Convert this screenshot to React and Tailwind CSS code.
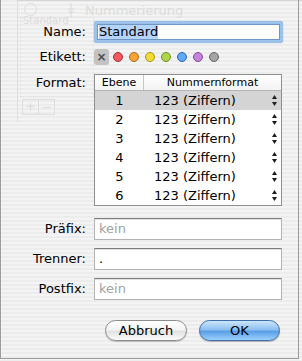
const LABELS = [
  { bg: 'bg-[#f25a5e]', ring: 'border-[#a83235]' },
  { bg: 'bg-[#f6a43a]', ring: 'border-[#b06a12]' },
  { bg: 'bg-[#f1dc3a]', ring: 'border-[#a89510]' },
  { bg: 'bg-[#b0d54a]', ring: 'border-[#6f8f1c]' },
  { bg: 'bg-[#62a9f6]', ring: 'border-[#2a68b0]' },
  { bg: 'bg-[#c483da]', ring: 'border-[#864a9c]' },
  { bg: 'bg-[#a5a5a5]', ring: 'border-[#666666]' },
]

const ROWS = [1, 2, 3, 4, 5, 6]

function Stepper() {
  return (
    <svg width="5" height="11" viewBox="0 0 5 11" className="shrink-0">
      <polygon points="2.5,0 5,4 0,4" fill="#1e1e1e" />
      <polygon points="0,7 5,7 2.5,11" fill="#1e1e1e" />
    </svg>
  )
}

function Field({ value, placeholder }) {
  return (
    <div className="w-[188px] h-[22px] bg-white border border-[#b3b3b3] border-t-[#7d7d7d] shadow-[inset_0_1px_0_#e2e2e2] flex items-center pl-[4px]">
      {value ? (
        <span className="text-black">{value}</span>
      ) : (
        <span className="text-[#a2a2a2]">{placeholder}</span>
      )}
    </div>
  )
}

function Row({ label, children, className = '' }) {
  return (
    <div className={`flex items-center ${className}`}>
      <div className="w-[85px] text-right leading-[12px]">{label}</div>
      <div className="ml-2">{children}</div>
    </div>
  )
}

// faded window behind the sheet
function Ghost() {
  return (
    <div className="absolute inset-0 pointer-events-none">
      <div className="absolute left-[17px] top-0 w-px h-[122px] bg-[#dedede]" />
      <div className="absolute left-[17px] top-0 right-0 h-px bg-[#d6d6d6]" />
      <div className="absolute left-[24px] top-[3px] w-[13px] h-[13px] rounded-full border border-[#dcdcdc]" />
      <svg width="8" height="14" viewBox="0 0 8 14" className="absolute left-[67px] top-[3px]">
        <line x1="4" y1="0" x2="4" y2="14" stroke="#dadada" />
        <line x1="1" y1="6" x2="7" y2="6" stroke="#dadada" />
        <line x1="1" y1="9" x2="7" y2="9" stroke="#dadada" />
      </svg>
      <div className="absolute left-[85px] top-[3px] text-[13px] leading-[15px] text-[#dcdcdc]">Nummerierung</div>
      <div className="absolute left-[20px] top-[17px] w-[74px] h-[80px] border border-dotted border-[#e0e0e0]" />
      <div className="absolute left-[23px] top-[17px] text-[10px] leading-[7px] text-[#dcdcdc]">Standard</div>
      <div className="absolute left-[22px] top-[99px] w-[33px] h-[16px] border border-[#dedede] flex text-[#dadada] text-[12px] leading-[14px]">
        <div className="flex-1 text-center border-r border-[#dedede]">+</div>
        <div className="flex-1 text-center">−</div>
      </div>
    </div>
  )
}

export default function App() {
  return (
    <div className="relative w-[302px] h-[361px] overflow-hidden bg-[repeating-linear-gradient(180deg,#ececec_0px,#ececec_2px,#f4f4f4_2px,#f4f4f4_4px)] font-['DejaVu_Sans',sans-serif] text-[13px] text-black">
      <Ghost />
      <div className="relative w-[299px] h-[359px] border-l border-b border-r border-[#9c9c9c] flex flex-col">
        <Row label="Name:" className="mt-[21px]">
          <div className="w-[189px] h-[22px] p-[3px] rounded-[3px] bg-[#9cc2e9] shadow-[0_0_1px_#6c9bd0]">
            <div className="h-full bg-white border border-[#6f96c4] flex items-center pl-[1px]">
              <span className="bg-[#b4d4fc] leading-[14px]">Standard</span>
            </div>
          </div>
        </Row>

        <Row label="Etikett:" className="mt-[6px]">
          <div className="flex items-center h-[16px]">
            <div className="w-[15px] h-[16px] rounded-[3px] bg-[#c3c3c3] flex items-center justify-center text-[#4a4a4a] text-[12px] leading-none font-bold">
              ×
            </div>
            <div className="flex items-center gap-[6px] ml-[4px]">
              {LABELS.map((c, i) => (
                <div key={i} className={`w-[10px] h-[10px] rounded-full border ${c.bg} ${c.ring}`} />
              ))}
            </div>
          </div>
        </Row>

        <div className="flex items-start mt-[9px]">
          <div className="w-[85px] text-right leading-[17px]">Format:</div>
          <div className="ml-2 w-[188px] h-[132px] border border-[#8f8f8f] bg-white flex flex-col">
            <div className="h-[16px] flex border-b border-[#b5b5b5] bg-[linear-gradient(180deg,#ffffff,#f3f3f3)] text-[11px] leading-[15px]">
              <div className="w-[49px] text-center border-r border-[#c6c6c6]">Ebene</div>
              <div className="flex-1 text-center">Nummernformat</div>
            </div>
            {ROWS.map((n) => (
              <div key={n} className={`h-[19px] flex items-center ${n === 1 ? 'bg-[#d4d4d4]' : ''}`}>
                <div className="w-[49px] text-center">{n}</div>
                <div className="flex-1 pl-[10px]">123 (Ziffern)</div>
                <div className="mr-[4px] flex items-center">
                  <Stepper />
                </div>
              </div>
            ))}
          </div>
        </div>

        <Row label="Präfix:" className="mt-[12px]">
          <Field placeholder="kein" />
        </Row>
        <Row label="Trenner:" className="mt-[8px]">
          <Field value="." />
        </Row>
        <Row label="Postfix:" className="mt-[8px]">
          <Field placeholder="kein" />
        </Row>

        <div className="flex mt-[20px] ml-[104px] gap-[12px]">
          <button className="w-[82px] h-[21px] rounded-full border border-[#8c8c8c] bg-[linear-gradient(180deg,#ffffff_0%,#f4f4f4_45%,#e2e2e2_55%,#fbfbfb_100%)] shadow-[0_1px_1px_rgba(0,0,0,0.2)] text-[13px] leading-[19px] text-black">
            Abbruch
          </button>
          <button className="w-[81px] h-[21px] rounded-full border border-[#3b6ea8] bg-[linear-gradient(180deg,#cde5fc_0%,#8dc0f1_45%,#5a9fe6_55%,#9dd0fb_100%)] shadow-[0_1px_1px_rgba(0,0,0,0.25)] text-[13px] leading-[19px] text-black">
            OK
          </button>
        </div>
      </div>
    </div>
  )
}
